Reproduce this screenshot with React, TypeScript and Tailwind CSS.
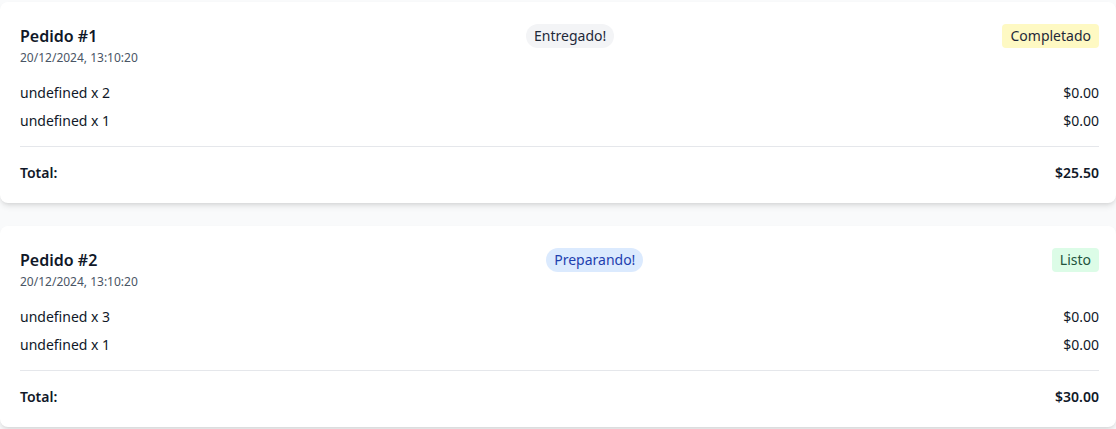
import React from 'react';

type Item = { name?: string; qty: number; price: number };
type Pedido = {
  id: number;
  fecha: string;
  estado: string;
  estadoCls: string;
  badge: string;
  badgeCls: string;
  items: Item[];
  total: number;
};

const PEDIDOS: Pedido[] = [
  {
    id: 1,
    fecha: '20/12/2024, 13:10:20',
    estado: 'Entregado!',
    estadoCls: 'bg-gray-100 text-gray-800',
    badge: 'Completado',
    badgeCls: 'bg-[#fef9c3] text-gray-800',
    items: [{ qty: 2, price: 0 }, { qty: 1, price: 0 }],
    total: 25.5,
  },
  {
    id: 2,
    fecha: '20/12/2024, 13:10:20',
    estado: 'Preparando!',
    estadoCls: 'bg-blue-100 text-[#1e40af]',
    badge: 'Listo',
    badgeCls: 'bg-[#dcfce7] text-[#22543d]',
    items: [{ qty: 3, price: 0 }, { qty: 1, price: 0 }],
    total: 30,
  },
];

function PedidoCard({ p }: { p: Pedido }) {
  return (
    <div className="bg-white rounded-lg shadow-md pl-5 pr-[17px] pt-[22px] pb-5">
      <div className="flex justify-between items-start">
        <div>
          <h3 className="text-base font-semibold leading-[25px] text-gray-900">Pedido #{p.id}</h3>
          <p className="text-xs leading-[18px] text-gray-600">{p.fecha}</p>
        </div>
        <span className={`px-2 py-0.5 rounded-full text-sm leading-5 ${p.estadoCls}`}>
          {p.estado}
        </span>
        <span className={`px-2 py-0.5 rounded text-sm leading-5 ${p.badgeCls}`}>
          {p.badge}
        </span>
      </div>

      <div className="mt-4 space-y-2">
        {p.items.map((it, i) => (
          <div key={i} className="flex justify-between text-sm leading-5 text-gray-900">
            <span>{String(it.name)} x {it.qty}</span>
            <span>${(it.price * it.qty).toFixed(2)}</span>
          </div>
        ))}
      </div>

      <div className="mt-[15px] pt-4 border-t border-gray-200 flex justify-between text-sm leading-5 font-semibold text-gray-900">
        <span>Total:</span>
        <span>${p.total.toFixed(2)}</span>
      </div>
    </div>
  );
}

export default function App() {
  return (
    <main
      className="min-h-screen bg-gray-50 pt-[2px]"
      style={{ fontFamily: '"Segoe UI", "Noto Sans", sans-serif' }}
    >
      <div className="space-y-[23px]">
        {PEDIDOS.map(p => (
          <PedidoCard key={p.id} p={p} />
        ))}
      </div>
    </main>
  );
}
